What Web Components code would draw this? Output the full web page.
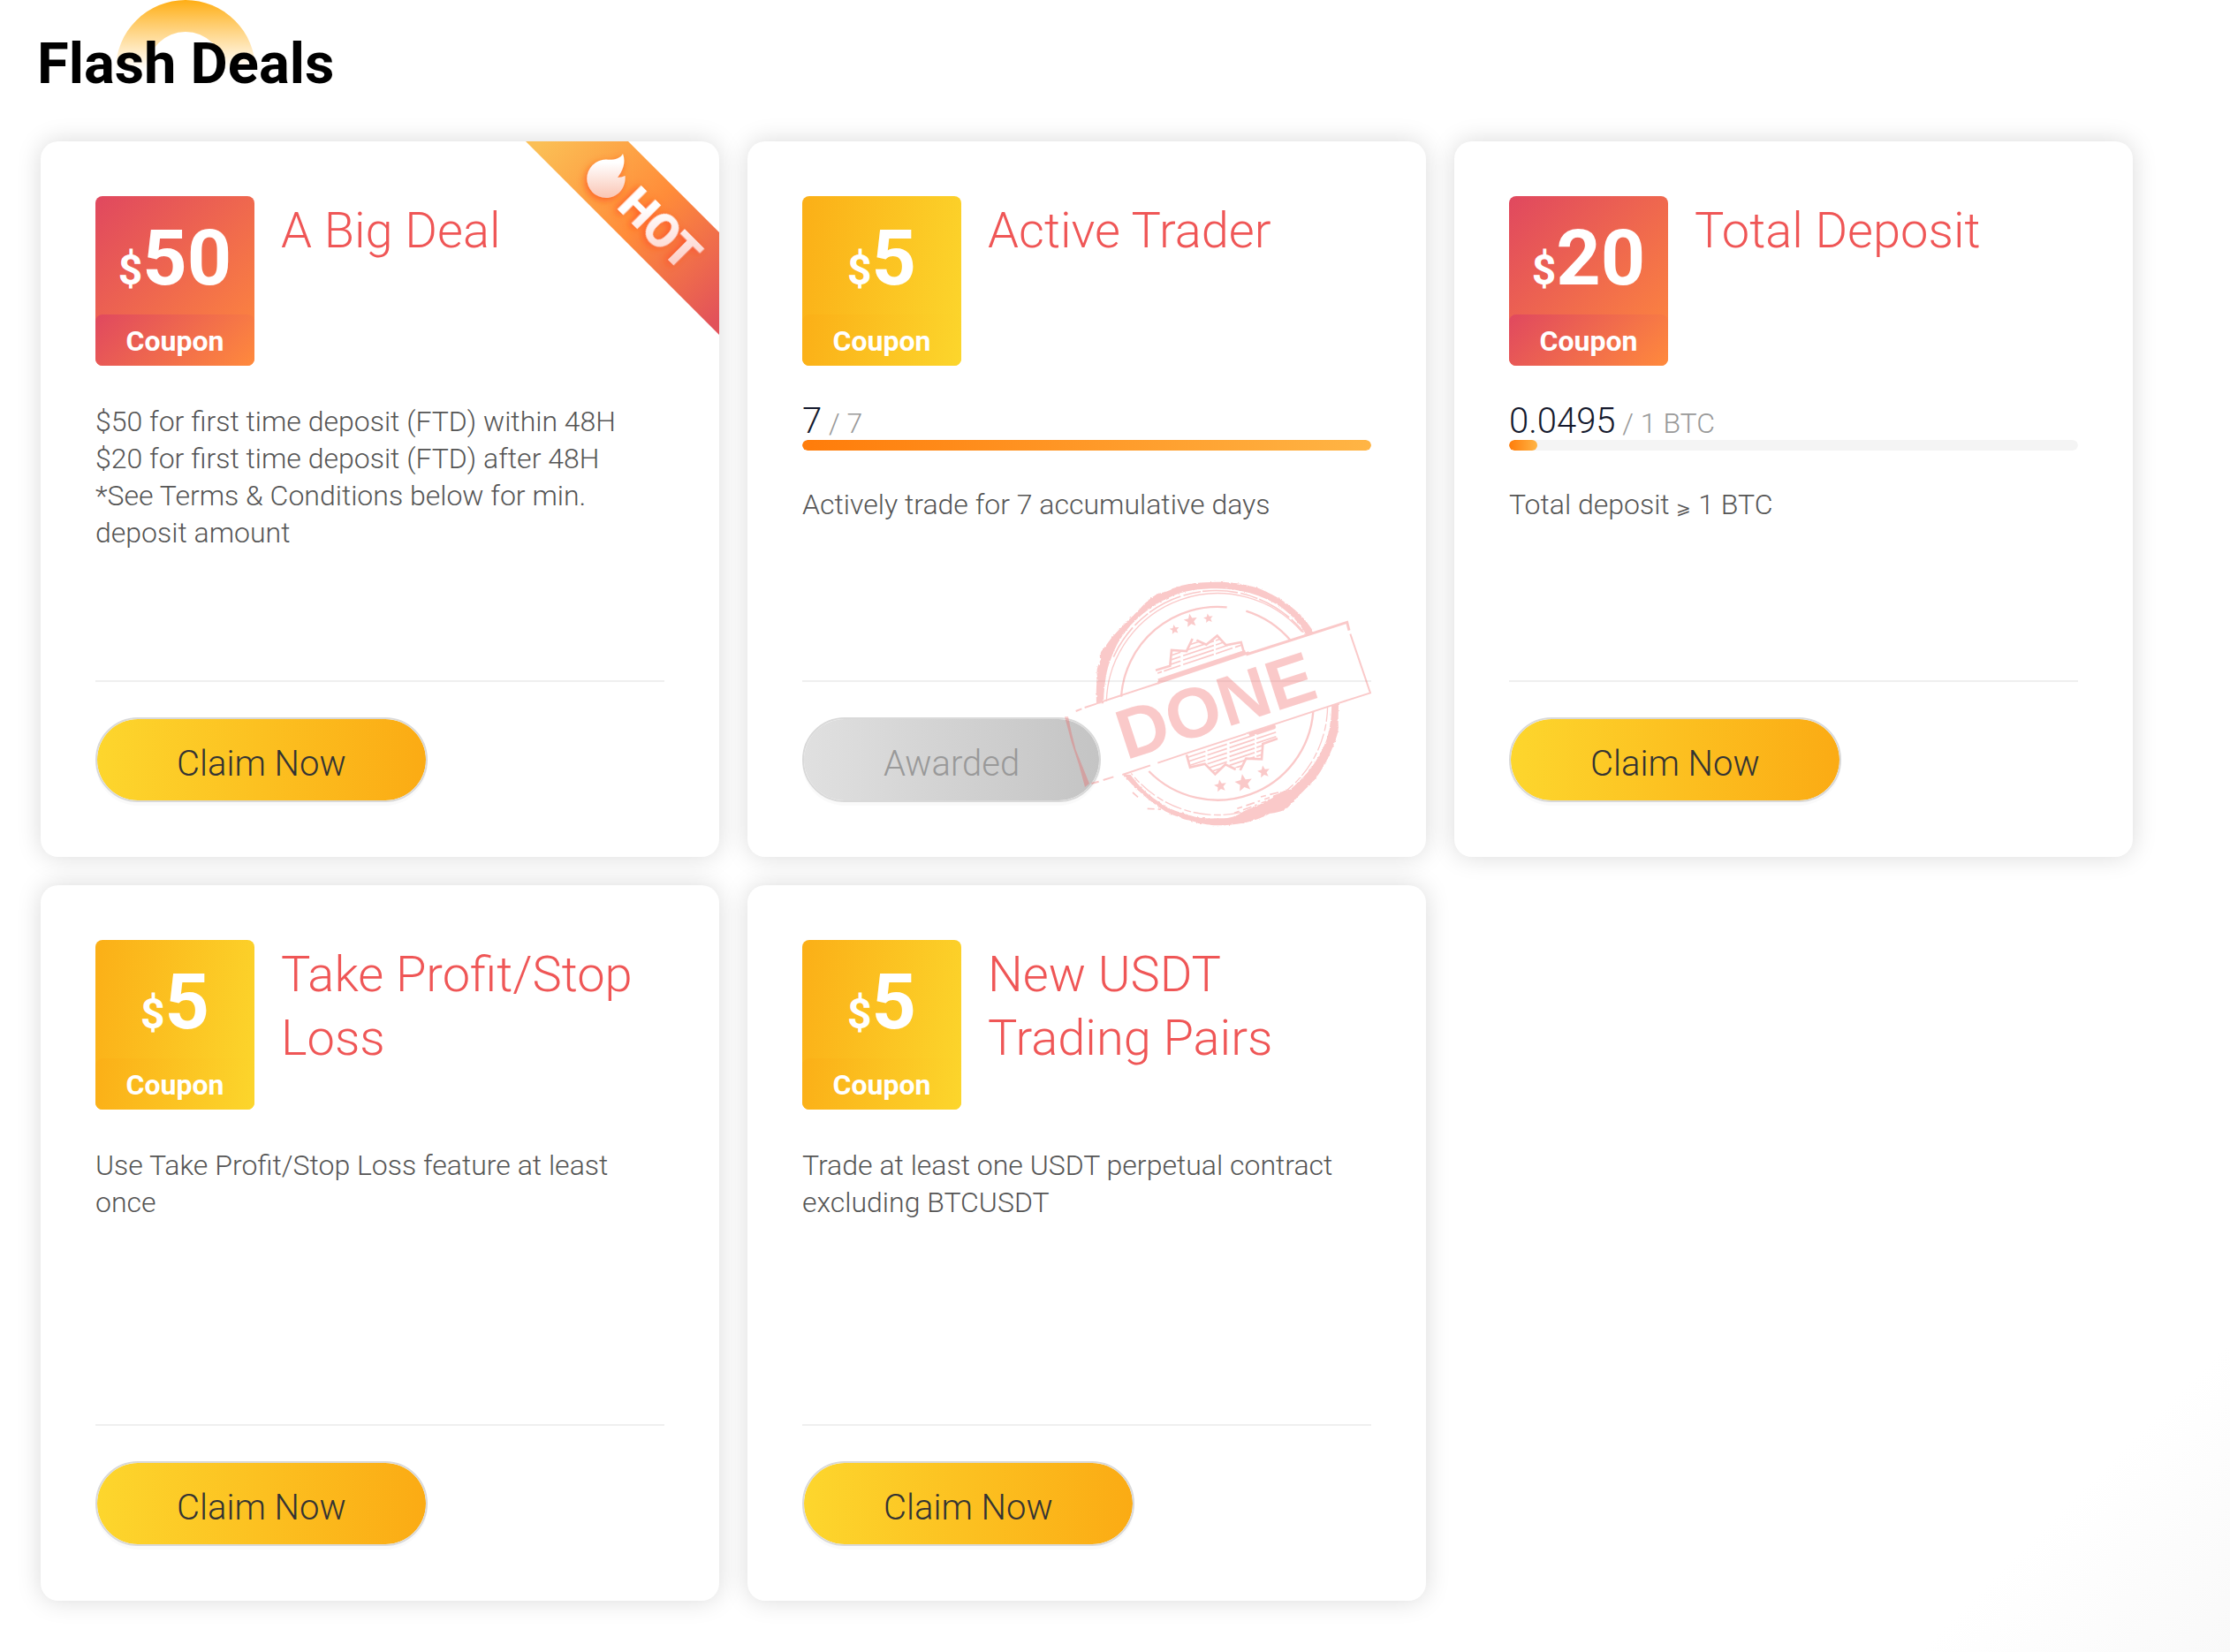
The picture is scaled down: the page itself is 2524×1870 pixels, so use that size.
<!DOCTYPE html>
<html lang="en">
<head>
<meta charset="utf-8">
<title>Flash Deals</title>
<style>
body {
  margin: 0;
  min-height: 100vh;
  font-family: Roboto, "Liberation Sans", sans-serif;
  background: linear-gradient(135deg, #fff 92%, #f9f9f9 100%);
}
.sign { font-size: 20px; }
</style>
</head>
<body>
<flash-deals>
  <span slot="title">Flash Deals</span>
  <deal-card amount="50" tone="red" hot>
    <span slot="title">A Big Deal</span>
    $50 for first time deposit (FTD) within 48H<br>
    $20 for first time deposit (FTD) after 48H<br>
    *See Terms &amp; Conditions below for min. deposit amount
  </deal-card>
  <deal-card amount="5" value="7" max="7" done>
    <span slot="title">Active Trader</span>
    Actively trade for 7 accumulative days
  </deal-card>
  <deal-card amount="20" tone="red" value="0.0495" max="1" unit="BTC">
    <span slot="title">Total Deposit</span>
    Total deposit <span class="sign">⩾</span> 1 BTC
  </deal-card>
  <deal-card amount="5">
    <span slot="title">Take Profit/Stop Loss</span>
    Use Take Profit/Stop Loss feature at least once
  </deal-card>
  <deal-card amount="5">
    <span slot="title">New USDT Trading Pairs</span>
    Trade at least one USDT perpetual contract excluding BTCUSDT
  </deal-card>
</flash-deals>

<script>
class FlashDeals extends HTMLElement {
  connectedCallback() {
    this.attachShadow({ mode: 'open' }).innerHTML = `
    <style>
      :host { display: block; padding: 0 110px 58px 46px; }
      header { position: relative; padding: 36px 0 52px; }
      svg { position: absolute; top: 0; left: 85px; }
      h1 {
        position: relative;
        margin: 0 0 0 -4px;
        font-size: 65px;
        line-height: 72px;
        font-weight: 700;
        color: #000;
      }
      .deals {
        display: grid;
        grid-template-columns: repeat(3, minmax(0, 1fr));
        gap: 32px;
      }
    </style>
    <header>
      <svg width="158" height="79" viewBox="0 0 158 79" aria-hidden="true">
        <defs>
          <linearGradient id="sun" x1="0" y1="0" x2="0" y2="1">
            <stop offset="0" stop-color="#ffae14"/>
            <stop offset="1" stop-color="#ffb72e" stop-opacity="0"/>
          </linearGradient>
        </defs>
        <path fill="url(#sun)" d="M0 79a79 79 0 0 1 158 0h-36a43 43 0 0 0-86 0z"/>
      </svg>
      <h1><slot name="title"></slot></h1>
    </header>
    <section class="deals"><slot></slot></section>
    `
  }
}

class CouponChip extends HTMLElement {
  connectedCallback() {
    this.attachShadow({ mode: 'open' }).innerHTML = `
    <style>
      :host {
        --chip: linear-gradient(100deg, #fbaf17, #fcd62c);
        display: block;
        flex: none;
        width: 180px;
        height: 192px;
        border-radius: 8px;
        background: var(--chip);
        color: #fff;
        font-weight: 700;
        text-align: center;
      }
      :host([tone="red"]) { --chip: linear-gradient(135deg, #e0485f, #ff8a3c); }
      .amount { height: 134px; font-size: 88px; line-height: 140px; white-space: nowrap; }
      small { font-size: 48px; }
      .label {
        height: 58px;
        border-radius: 8px;
        background: var(--chip);
        font-size: 32px;
        line-height: 60px;
      }
    </style>
    <div class="amount"><small>$</small><slot></slot></div>
    <div class="label">Coupon</div>
    `
  }
}

class DealProgress extends HTMLElement {
  connectedCallback() {
    const value = this.getAttribute('value')
    const max = this.getAttribute('max')
    const unit = this.getAttribute('unit') || ''
    this.attachShadow({ mode: 'open' }).innerHTML = `
    <style>
      :host { display: block; margin-bottom: 40px; }
      label { display: block; height: 42px; font-size: 32px; line-height: 42px; color: #999; font-weight: 300; }
      b { font-size: 40px; font-weight: 300; color: #14192d; }
      progress {
        display: block;
        width: 100%;
        height: 12px;
        appearance: none;
        border: 0;
        border-radius: 6px;
        overflow: hidden;
      }
      progress::-webkit-progress-bar { background: #f4f4f4; border-radius: 6px; }
      progress::-webkit-progress-value {
        background: linear-gradient(90deg, #ff7c0a, #ffb545);
        border-radius: 6px;
      }
    </style>
    <label for="bar"><b>${value}</b> / ${max} ${unit}</label>
    <progress id="bar" value="${value}" max="${max}"></progress>
    `
  }
}

class HotRibbon extends HTMLElement {
  connectedCallback() {
    this.attachShadow({ mode: 'open' }).innerHTML = `
    <style>
      :host { display: block; }
      svg { display: block; }
      text { font-size: 53px; font-weight: 900; }
    </style>
    <svg width="220" height="220" viewBox="0 0 220 220">
      <defs>
        <linearGradient id="band" gradientUnits="userSpaceOnUse" x1="20" y1="0" x2="220" y2="200">
          <stop offset="0" stop-color="#fbbf55"/>
          <stop offset=".5" stop-color="#ff8c39"/>
          <stop offset="1" stop-color="#e2525a"/>
        </linearGradient>
        <linearGradient id="fire" x1="0" y1="0" x2="0" y2="1">
          <stop offset=".2" stop-color="#fff"/>
          <stop offset="1" stop-color="#fac5b4"/>
        </linearGradient>
        <linearGradient id="word" gradientUnits="userSpaceOnUse" x1="-26" y1="-26" x2="24" y2="24">
          <stop offset="0" stop-color="#fff"/>
          <stop offset="1" stop-color="#fcc8bf"/>
        </linearGradient>
        <filter id="glow" x="-40%" y="-40%" width="180%" height="180%">
          <feDropShadow dx="-2" dy="3" stdDeviation="4" flood-color="#ff4a1c" flood-opacity=".7"/>
        </filter>
      </defs>
      <path fill="url(#band)" d="M1 0h116l103 103v116z"/>
      <path filter="url(#glow)" fill="url(#fire)" d="M92 20.6C100 21.5 108 20 111 14C115 25 110 34 105 41C108 41 111 40 113.6 39C114.5 54 104 64 92 64A21.7 21.7 0 0 1 92 20.6Z"/>
      <g transform="translate(140 112) rotate(45)" filter="url(#glow)">
        <text text-anchor="middle" fill="url(#word)">HOT</text>
      </g>
    </svg>
    `
  }
}

class DoneStamp extends HTMLElement {
  star(x, y, r) {
    const points = []
    for (let i = 0; i < 10; i++) {
      const a = (i * 36 - 100) * Math.PI / 180
      const d = i % 2 ? r * 0.45 : r
      points.push(`${(x + d * Math.cos(a)).toFixed(1)},${(y + d * Math.sin(a)).toFixed(1)}`)
    }
    return `<polygon points="${points.join(' ')}"/>`
  }

  // hatching that runs parallel to the band
  hatch(from, to) {
    let d = ''
    for (let y = from; y < to; y += 15) d += `M300 ${y}L900 ${y - 201}`
    return d
  }

  connectedCallback() {
    this.attachShadow({ mode: 'open' }).innerHTML = `
    <style>
      :host { display: block; pointer-events: none; }
      svg { display: block; opacity: .3; }
      text { font-family: "Liberation Sans", Arial, sans-serif; font-size: 240px; font-weight: 700; }
    </style>
    <svg width="347" height="280" viewBox="74 80 1041 840" fill="#f05050">
      <defs>
        <mask id="outside" maskUnits="userSpaceOnUse" x="74" y="80" width="1041" height="840">
          <rect x="74" y="80" width="1041" height="840" fill="#fff"/>
          <path fill="#000" d="M78 543L1033 222L1112 462L155 778Z"/>
        </mask>
        <clipPath id="upper"><path d="M388 385L432 370L437 317L488 320L508 284L555 298L592 266L622 300L673 290L685 330L395 428Z"/></clipPath>
        <clipPath id="lower"><path d="M488 672L500 715L550 703L585 738L620 705L670 720L690 685L743 687L747 635L797 617L788 575Z"/></clipPath>
        <filter id="rough" x="-5%" y="-5%" width="110%" height="110%">
          <feTurbulence type="fractalNoise" baseFrequency=".1" numOctaves="2" seed="4"/>
          <feDisplacementMap in="SourceGraphic" scale="8" xChannelSelector="R" yChannelSelector="G"/>
        </filter>
      </defs>
      <g mask="url(#outside)">
        <g filter="url(#rough)">
          <path d="M182 498C180 450 184 420 184 400C180 380 190 365 196 350C188 335 200 315 212 304C240 262 262 245 290 215C330 180 350 150 375 135C395 118 425 122 440 108C480 90 530 86 593 85C640 85 690 92 735 108C800 135 850 170 882 205C900 225 915 245 922 262L895 268C880 235 850 200 800 165C740 128 670 109 593 108C530 108 480 114 430 138C380 160 330 195 285 248C255 285 240 320 230 350C215 385 207 440 206 498Z"/>
          <path d="M1004 490C1004 530 1002 560 1004 580C1000 610 992 625 985 645C970 685 950 720 925 755C890 790 860 820 838 845C820 865 795 868 770 872C720 900 660 912 593 912C565 912 545 905 528 905C510 895 480 895 465 885C430 875 400 855 380 840C340 810 300 775 272 738L298 740C330 785 360 810 400 836C430 860 470 868 500 878C530 888 560 889 593 888C640 889 655 880 675 868C710 850 740 842 770 825C790 812 810 792 840 790C900 740 935 690 960 630C975 590 982 540 980 490Z"/>
        </g>
        <g fill="none" stroke="#f05050">
          <path stroke-width="4" d="M216 490A378 378 0 0 1 880 255"/>
          <path stroke-width="5" stroke-dasharray="120 10 60 6" d="M240 340A382 382 0 0 1 890 262"/>
          <path stroke-width="4" stroke-dasharray="60 8 24 10" d="M967 500A374 374 0 0 1 300 735"/>
          <path stroke-width="5" stroke-dasharray="18 14 30 12 8 16" d="M660 855L835 795M650 870L800 815M740 815L800 800"/>
          <path stroke-width="5" stroke-dasharray="24 12 10 10" d="M305 800L330 822M355 855L410 858L480 885"/>
          <path stroke-width="7" d="M266 475A328 328 0 0 1 625 171M690 184A328 328 0 0 1 842 285"/>
          <path stroke-width="7" d="M918 525A326 326 0 0 1 360 728"/>
        </g>
        <g fill="none" stroke="#f05050" stroke-width="8">
          <path d="M383 385L432 370L437 317L488 320L508 278M522 283L555 298L592 268L622 300L673 290L685 332"/>
          <path d="M488 672L500 715L550 703L585 738L620 705L655 722M670 725L690 685L743 687L747 635L797 617"/>
          <path stroke-width="5" stroke-dasharray="110 7 60 9" clip-path="url(#upper)" d="${this.hatch(350, 440)}"/>
          <path stroke-width="5" stroke-dasharray="90 7 70 9" clip-path="url(#lower)" d="${this.hatch(730, 880)}"/>
          <path stroke-width="12" d="M392 420L688 322M700 604L790 574"/>
        </g>
        ${this.star(447, 247, 17)}${this.star(502, 217, 24)}${this.star(562, 209, 17)}
        ${this.star(603, 778, 22)}${this.star(682, 768, 31)}${this.star(750, 730, 22)}
      </g>
      <g fill="none" stroke="#f05050">
        <path stroke-width="6" d="M112 524L132 516M142 512L182 499M182 498L395 428"/>
        <path stroke-width="9" d="M390 428L700 325M690 332L1033 222L1040 250"/>
        <path stroke-width="6" d="M1044 262L1112 462L1000 498L690 600"/>
        <path stroke-width="6" d="M690 601L488 667L390 700M365 708L270 740M240 747L205 758M190 763L165 770"/>
      </g>
      <path d="M74 543L86 543L98 600L112 655L158 770L143 782L122 705L98 632Z"/>
      <text transform="translate(612 583) rotate(-18)" text-anchor="middle">DONE</text>
    </svg>
    `
  }
}

class DealCard extends HTMLElement {
  connectedCallback() {
    const done = this.hasAttribute('done')
    const tone = this.getAttribute('tone') || 'yellow'
    const progress = this.hasAttribute('value')
      ? `<deal-progress value="${this.getAttribute('value')}" max="${this.getAttribute('max')}" unit="${this.getAttribute('unit') || ''}"></deal-progress>`
      : ''
    this.attachShadow({ mode: 'open' }).innerHTML = `
    <style>
      :host {
        display: block;
        position: relative;
        overflow: hidden;
        border-radius: 20px;
        background: #fff;
        box-shadow: 0 0 28px rgba(0, 0, 0, .15);
      }
      article { display: flex; flex-direction: column; padding: 62px; }
      .head { display: flex; gap: 30px; margin-bottom: 42px; }
      h2 {
        margin: 0;
        padding-top: 3px;
        font-size: 56px;
        line-height: 72px;
        font-weight: 300;
        color: #ef5656;
      }
      .body { min-height: 314px; }
      p { margin: 0; font-size: 32px; line-height: 42px; font-weight: 300; color: #555; }
      .foot { border-top: 2px solid #efefef; padding-top: 40px; }
      button {
        display: block;
        height: 96px;
        padding: 8px 90px 0;
        border: 2px solid #d9d9d9;
        border-radius: 48px;
        background: linear-gradient(90deg, #fdd62d, #fbab14) padding-box;
        box-shadow: 0 4px 0 rgba(0, 0, 0, .02);
        font: 300 40px Roboto, "Liberation Sans", sans-serif;
        color: #333;
        cursor: pointer;
      }
      button:disabled {
        background: linear-gradient(90deg, #e0e0e0, #c4c4c4) padding-box;
        color: #999;
        cursor: default;
      }
      hot-ribbon { position: absolute; top: 0; right: 0; }
      done-stamp { position: absolute; right: 62px; bottom: 33px; }
    </style>
    <article>
      <div class="head">
        <coupon-chip tone="${tone}">${this.getAttribute('amount')}</coupon-chip>
        <h2><slot name="title"></slot></h2>
      </div>
      <div class="body">
        ${progress}
        <p><slot></slot></p>
      </div>
      <div class="foot">
        <button type="button" ${done ? 'disabled' : ''}>${done ? 'Awarded' : 'Claim Now'}</button>
      </div>
    </article>
    ${this.hasAttribute('hot') ? '<hot-ribbon></hot-ribbon>' : ''}
    ${done ? '<done-stamp></done-stamp>' : ''}
    `
  }
}

customElements.define('coupon-chip', CouponChip)
customElements.define('deal-progress', DealProgress)
customElements.define('hot-ribbon', HotRibbon)
customElements.define('done-stamp', DoneStamp)
customElements.define('deal-card', DealCard)
customElements.define('flash-deals', FlashDeals)
</script>
</body>
</html>
